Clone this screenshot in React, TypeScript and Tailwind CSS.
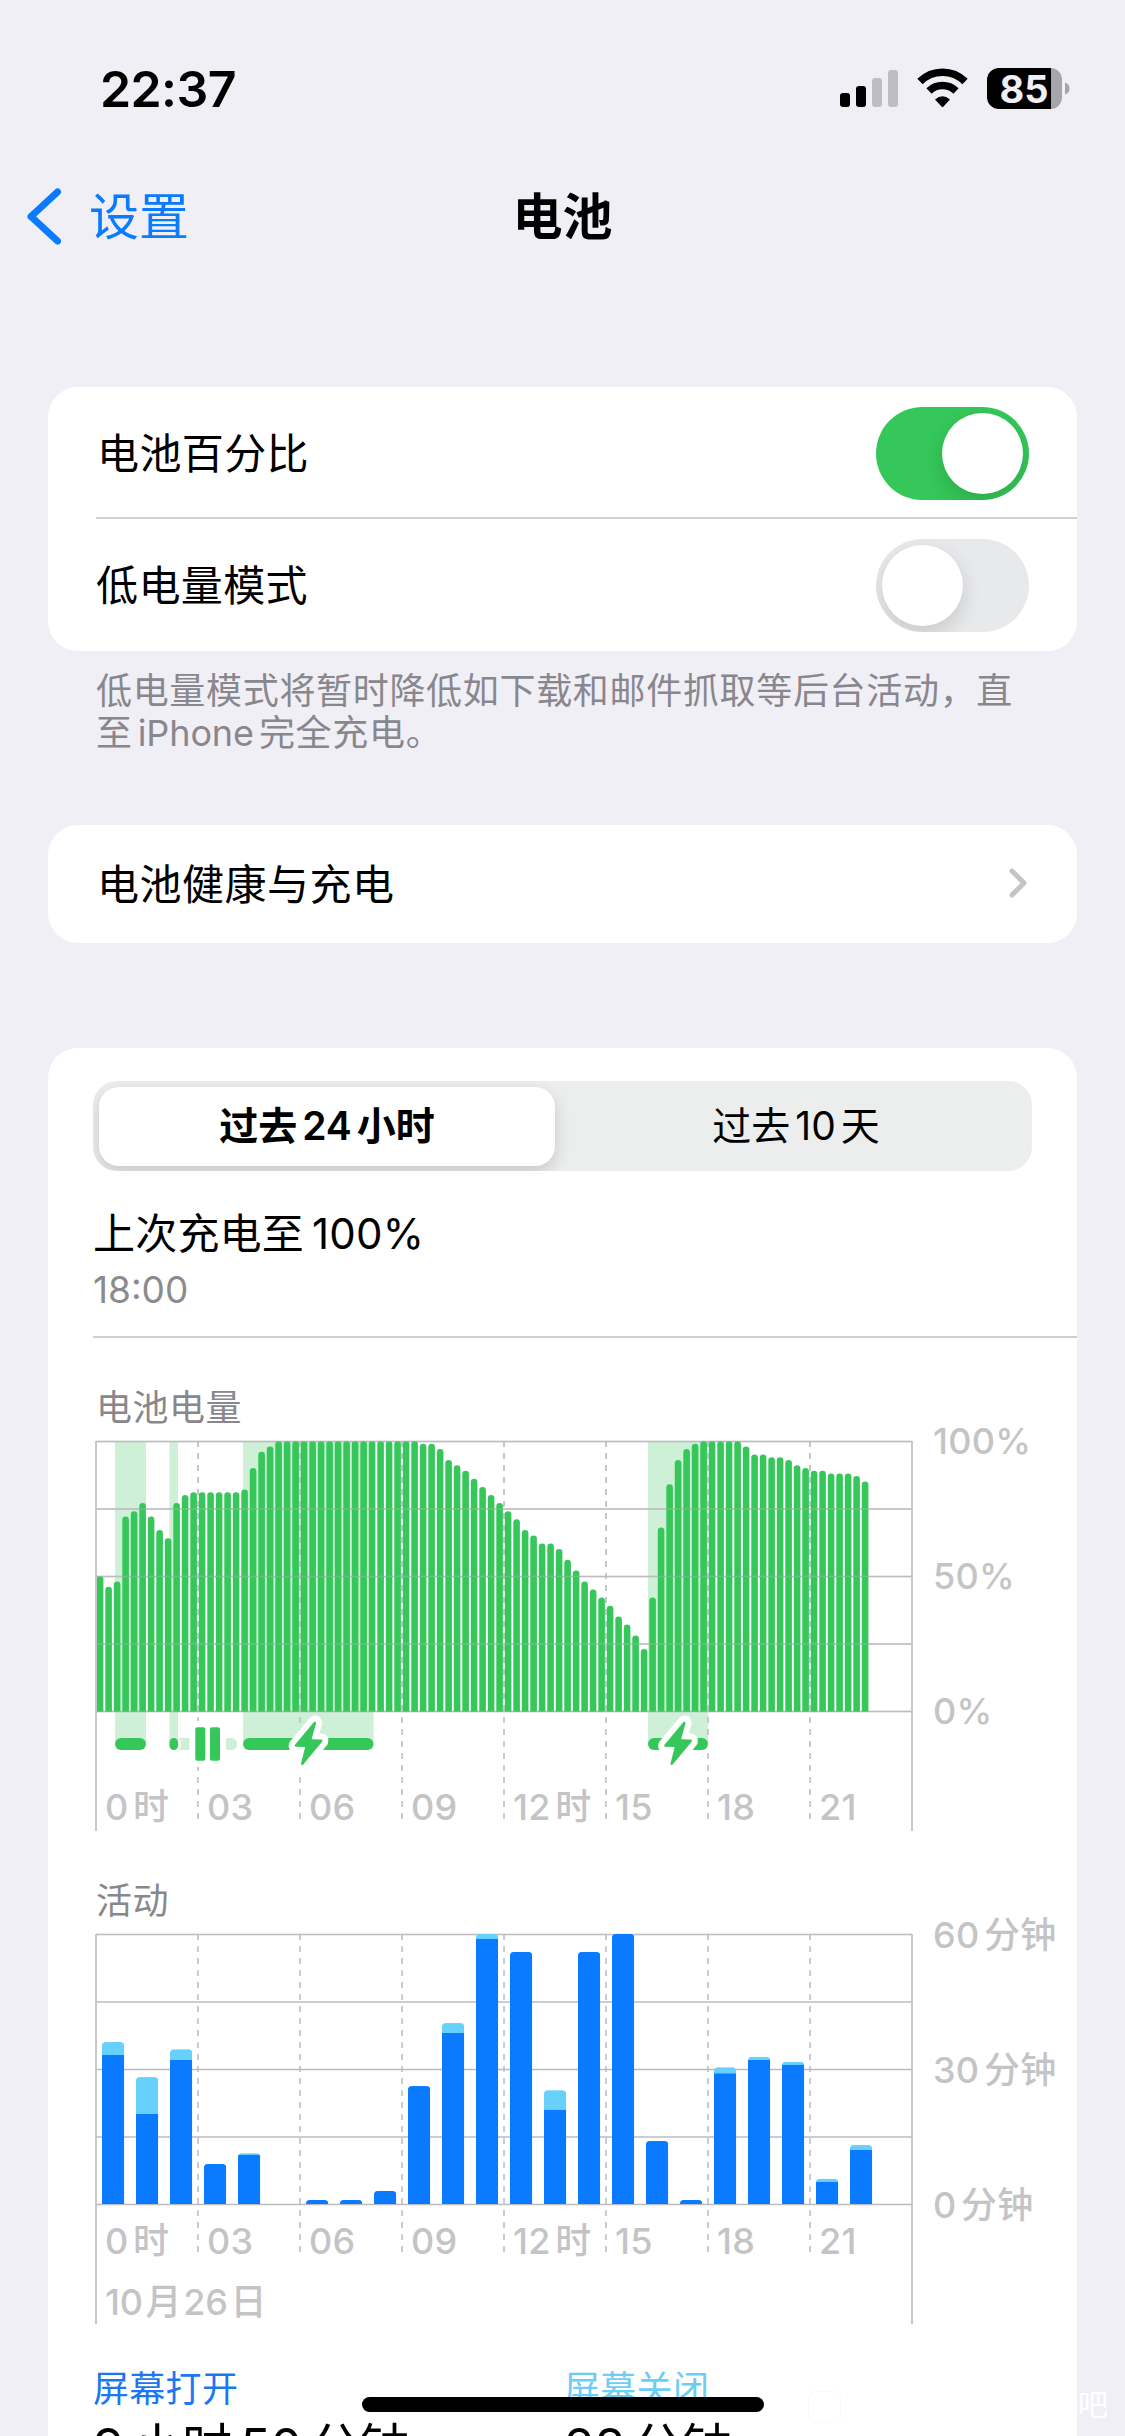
import React from "react";

// one bar per 15 minutes, value in %
const batteryLevels = [
    50, 46, 48, 72, 74, 77, 72, 67, 64, 77, 80, 81,
    81, 81, 81, 81, 81, 82, 90, 96, 98, 100, 100, 100,
    100, 100, 100, 100, 100, 100, 100, 100, 100, 100, 100, 100,
    100, 100, 99, 99, 97, 93, 91, 89, 86, 83, 80, 77,
    74, 71, 67, 65, 62, 62, 60, 56, 52, 48, 45, 42,
    39, 35, 32, 28, 23, 42, 68, 84, 93, 97, 99, 100,
    100, 100, 100, 100, 98, 95, 95, 94, 94, 93, 91, 90,
    89, 89, 88, 88, 88, 87, 85,
];

// charging ranges, in px from the left edge of the plot
const charging = [
    { start: 19, end: 50 },
    { start: 73.5, end: 82 },
    { start: 147, end: 277.5 },
    { start: 552, end: 612 },
];

// one bar per hour, minutes with the screen on / total minutes
const activity = [
    { on: 33.1, total: 36 },
    { on: 20, total: 28.2 },
    { on: 32, total: 34.4 },
    { on: 8.9, total: 8.9 },
    { on: 10.9, total: 11.3 },
    { on: 0, total: 0 },
    { on: 0.9, total: 0.9 },
    { on: 0.9, total: 0.9 },
    { on: 2.9, total: 2.9 },
    { on: 26.2, total: 26.2 },
    { on: 38, total: 40.2 },
    { on: 58.9, total: 60 },
    { on: 56, total: 56 },
    { on: 20.9, total: 25.3 },
    { on: 56, total: 56 },
    { on: 60, total: 60 },
    { on: 14, total: 14 },
    { on: 0.9, total: 0.9 },
    { on: 29, total: 30.4 },
    { on: 32, total: 32.7 },
    { on: 30.9, total: 31.6 },
    { on: 4.9, total: 5.6 },
    { on: 12, total: 13.1 },
];

const hours = [
    { num: "0", unit: "时" },
    { num: "03", unit: "" },
    { num: "06", unit: "" },
    { num: "09", unit: "" },
    { num: "12", unit: "时" },
    { num: "15", unit: "" },
    { num: "18", unit: "" },
    { num: "21", unit: "" },
];

const LEFT = 48;
const TOP = 20;
const WIDTH = 816;
const HEIGHT = 270;

function StatusBar() {
    return (
        <div className="flex h-[176px] justify-between pl-[100px] pr-[55px] pt-[64px]">
            <span className="h-[50px] text-[50px] font-semibold leading-[50px] tracking-[-0.6px]">22:37</span>
            <svg width="232" height="50" viewBox="0 0 232 50">
                <rect x="2" y="29" width="10" height="14" rx="3" fill="#000" />
                <rect x="18" y="22" width="10" height="21" rx="3" fill="#000" />
                <rect x="34" y="14" width="10" height="29" rx="3" fill="#bfbdc4" />
                <rect x="50" y="6" width="10" height="37" rx="3" fill="#bfbdc4" />
                <g fill="none" stroke="#000" strokeWidth="7.6">
                    <path d="M82 17.5A32 32 0 0 1 127 17.5" />
                    <path d="M91 27A19.5 19.5 0 0 1 118 27" />
                </g>
                <path d="M97 35.6Q104.500 29 112 35.6L105.500 42.4Q104.500 43.4 103.500 42.4Z" fill="#000" />
                <path d="M161 4H213V45H161A12 12 0 0 1 149 33V16A12 12 0 0 1 161 4Z" fill="#000" />
                <path d="M213 4A11 12 0 0 1 224 16V33A11 12 0 0 1 213 45Z" fill="#a6a5aa" />
                <path d="M227 18.5Q231.500 20 231.500 24.500T227 30.500Z" fill="#a6a5aa" />
                <text x="186" y="38.5" textAnchor="middle" fontSize="38" fontWeight="700" fill="#f1eff6">85</text>
            </svg>
        </div>
    );
}

function NavBar() {
    return (
        <div className="grid h-[211px] grid-cols-3 items-start px-[25px] pt-[10px]">
            <div className="flex h-[62px] items-center text-[#0a7aff]">
                <svg width="38" height="60" viewBox="0 0 38 60" fill="none" stroke="currentColor" strokeWidth="7" strokeLinecap="round" strokeLinejoin="round">
                    <path d="M32.500 5L6 29.500L32.500 54" />
                </svg>
                <span className="ml-[26px] text-[50px] leading-[62px]">设置</span>
            </div>
            <h1 className="text-center text-[50px] font-bold leading-[62px]">电池</h1>
        </div>
    );
}

function Toggle({ on }: { on: boolean }) {
    return (
        <div
            className={`flex h-[93px] w-[153px] items-center overflow-hidden rounded-full px-[6px] ${on ? "justify-end bg-[#35c759]" : "justify-start bg-[#e8e9eb]"}`}
        >
            <div className="size-[81px] rounded-full bg-white shadow-[0_8px_20px_rgba(0,0,0,0.14)]" />
        </div>
    );
}

function ChartText({ x, y, num, unit }: { x: number; y: number; num: string; unit?: string }) {
    return (
        <text x={x} y={y} fontSize="36" fontWeight="500" letterSpacing="0.3" fill="#c4c4c6">
            {num}
            {unit && <tspan dx="4.5">{unit}</tspan>}
        </text>
    );
}

function Grid({ dashEnd, faint }: { dashEnd: number; faint?: boolean }) {
    return (
        <g stroke="#bcbcc0" strokeWidth="1.5" opacity={faint ? 0.35 : 1}>
            {[0, 1, 2, 3, 4].map((i) => (
                <line
                    key={i}
                    x1={LEFT}
                    x2={LEFT + WIDTH}
                    y1={TOP + (i * HEIGHT) / 4 + 0.5}
                    y2={TOP + (i * HEIGHT) / 4 + 0.5}
                />
            ))}
            {[1, 2, 3, 4, 5, 6, 7].map((i) => (
                <line
                    key={i}
                    x1={LEFT + i * 102}
                    x2={LEFT + i * 102}
                    y1={TOP}
                    y2={dashEnd}
                    strokeDasharray="6 6"
                />
            ))}
        </g>
    );
}

function Frame() {
    return (
        <g stroke="#c2c2c5" strokeWidth="1.8">
            <line x1={LEFT} x2={LEFT} y1={TOP} y2="410" />
            <line x1={LEFT + WIDTH} x2={LEFT + WIDTH} y1={TOP} y2="410" />
        </g>
    );
}

function Bolt({ x }: { x: number }) {
    const bolt = "M20 0.500L0.800 23.500Q0 25.200 1.800 25.300L11.200 25.600L7 42Q7 44.600 9.200 43L28.300 20Q29 18.200 27.200 18L17.600 17.700L22 2Q22 -1 20 0.500Z";
    return (
        <g transform={`translate(${x} 300.5)`}>
            <path d={bolt} fill="#fff" stroke="#fff" strokeWidth="12" strokeLinejoin="round" />
            <path d={bolt} fill="#35c759" />
        </g>
    );
}

function BatteryChart() {
    return (
        <svg width="1029" height="410" viewBox="0 0 1029 410" className="block overflow-visible">
            {charging.map((c) => (
                <rect key={c.start} x={LEFT + c.start} y={TOP} width={c.end - c.start} height="303" fill="#cdf0d6" />
            ))}
            <Grid dashEnd={404} />
            {batteryLevels.map((level, i) => {
                const x = LEFT + 0.8 + i * 8.5;
                const y = TOP + HEIGHT - level * 2.7;
                return (
                    <path
                        key={i}
                        d={`M${x} ${TOP + HEIGHT + 1}V${y + 3.3}a3.3 3.3 0 0 1 6.6 0V${TOP + HEIGHT + 1}Z`}
                        fill="#35c759"
                    />
                );
            })}
            <Grid dashEnd={TOP + HEIGHT} faint />
            <Frame />
            {charging.map((c) => (
                <g key={c.start}>
                    <rect x={LEFT + c.start - 1.5} y="317" width={c.end - c.start + 3} height="12" fill="#fff" />
                    <rect x={LEFT + c.start} y="315" width={c.end - c.start} height="7" fill="#cdf0d6" />
                    <rect
                        x={LEFT + c.start}
                        y="317"
                        width={c.end - c.start}
                        height="12"
                        rx={Math.min(6, (c.end - c.start) / 2)}
                        fill="#35c759"
                    />
                </g>
            ))}
            {/* charging on hold */}
            <rect x="142" y="300" width="34" height="46" fill="#fff" />
            <path d="M130.500 317H141.500V329H130.500Q136 323 130.500 317Z" fill="#cdf0d6" />
            <path d="M178 317H183Q189 317 189 323T183 329H178Z" fill="#cdf0d6" />
            <rect x="147.300" y="306.300" width="10" height="33.400" rx="2" fill="#35c759" />
            <rect x="162" y="306.300" width="10" height="33.400" rx="2" fill="#35c759" />
            <Bolt x={246} />
            <Bolt x={615.5} />
            {hours.map((h, i) => (
                <ChartText key={i} x={57 + i * 102} y={399} num={h.num} unit={h.unit} />
            ))}
            <ChartText x={885} y={33} num="100%" />
            <ChartText x={885} y={168} num="50%" />
            <ChartText x={885} y={303} num="0%" />
        </svg>
    );
}

function ActivityChart() {
    return (
        <svg width="1029" height="410" viewBox="0 0 1029 410" className="block overflow-visible">
            <Grid dashEnd={344} />
            <Frame />
            {activity.map((a, i) => {
                const x = LEFT + 6 + i * 34;
                const h = a.total * 4.5;
                const r = Math.min(4, h);
                const y = TOP + HEIGHT - h;
                const clip = `hour-${i}`;
                return (
                    <g key={i}>
                        <clipPath id={clip}>
                            <path d={`M${x} ${TOP + HEIGHT}V${y + r}q0 ${-r} ${r} ${-r}h${22.2 - r * 2}q${r} 0 ${r} ${r}V${TOP + HEIGHT}Z`} />
                        </clipPath>
                        <g clipPath={`url(#${clip})`}>
                            <rect x={x} y={y} width="22.2" height={h} fill="#68d0fc" />
                            <rect x={x} y={TOP + HEIGHT - a.on * 4.5} width="22.2" height={a.on * 4.5} fill="#0a7aff" />
                        </g>
                    </g>
                );
            })}
            {hours.map((h, i) => (
                <ChartText key={i} x={57 + i * 102} y={339.5} num={h.num} unit={h.unit} />
            ))}
            <text x="57" y="400.5" fontSize="36" fontWeight="500" letterSpacing="-0.3" fill="#c4c4c6">
                10<tspan dx="3">月</tspan><tspan dx="2">26</tspan><tspan dx="3">日</tspan>
            </text>
            <ChartText x={885} y={33.5} num="60" unit="分钟" />
            <ChartText x={885} y={168.5} num="30" unit="分钟" />
            <ChartText x={885} y={303.5} num="0" unit="分钟" />
        </svg>
    );
}

export default function App() {
    return (
        <div className="relative h-[2436px] w-[1125px] overflow-hidden bg-[#f1eff6] font-['Inter','Noto_Sans_CJK_SC',sans-serif] text-black">
            <StatusBar />
            <NavBar />

            <div className="ml-[48px] mr-[48px] rounded-[30px] bg-white pl-[48px] text-[42px] tracking-[0.4px]">
                <div className="flex h-[132px] items-center justify-between border-b-2 border-[#d0d0d3] pr-[48px] pt-[2px]">
                    <span className="pl-px">电池百分比</span>
                    <Toggle on />
                </div>
                <div className="flex h-[132px] items-center justify-between pr-[48px]">
                    <span className="pt-px">低电量模式</span>
                    <Toggle on={false} />
                </div>
            </div>
            <p className="ml-[96px] h-[174px] whitespace-nowrap pt-[19px] text-[36px] leading-[42px] tracking-[0.68px] text-[#88878d]">
                低电量模式将暂时降低如下载和邮件抓取等后台活动，直
                <br />
                至<span className="mx-[5px] tracking-[-0.1px]">iPhone</span>完全充电。
            </p>

            <div className="mx-[48px] flex h-[118px] items-center justify-between rounded-[30px] bg-white pl-[49px] pr-[49px] text-[42px] tracking-[0.5px]">
                <span>电池健康与充电</span>
                <svg width="21" height="34" viewBox="0 0 21 34" fill="none" stroke="#c4c4c7" strokeWidth="5" strokeLinecap="round" strokeLinejoin="round">
                    <path d="M5 4L17 16L5 28" />
                </svg>
            </div>

            <div className="mx-[48px] mt-[105px] h-[1400px] rounded-t-[30px] bg-white pt-[33px]">
                <div className="ml-[45px] flex h-[90px] w-[939px] items-center overflow-hidden rounded-[24px] bg-[#eceeed] pl-[6px] text-[39px]">
                    <div className="flex h-[79px] w-[456px] items-center justify-center rounded-[20px] bg-white font-semibold shadow-[0_6px_16px_rgba(0,0,0,0.16)]">
                        过去<span className="mx-[5px]">24</span>小时
                    </div>
                    <div className="flex flex-1 items-center justify-center pl-[5px]">
                        过去<span className="mx-[5px]">10</span>天
                    </div>
                </div>

                <div className="ml-[45px] h-[167px] border-b-2 border-[#cfcfd2] pt-[33px]">
                    <p className="text-[42px] leading-[60px] tracking-[0.2px]">
                        上次充电至<span className="ml-[8px]">100%</span>
                    </p>
                    <p className="text-[37px] leading-[52px] text-[#8b8b8e]">18:00</p>
                </div>

                <p className="h-[83px] pl-[48px] pt-[49px] text-[36px] leading-[42px] tracking-[0.5px] text-[#88888c]">电池电量</p>
                <BatteryChart />
                <p className="h-[83px] pl-[48px] pt-[49px] text-[36px] leading-[42px] tracking-[0.5px] text-[#88888c]">活动</p>
                <ActivityChart />

                <div className="flex pl-[45px] pt-[44px]">
                    <div className="w-[471px]">
                        <p className="text-[36px] leading-[42px] tracking-[0.3px] text-[#1b78f2]">屏幕打开</p>
                        <p className="mt-[6px] whitespace-nowrap text-[50px] leading-[62px]">
                            9<span className="mx-[8px]">小时</span>50<span className="ml-[8px]">分钟</span>
                        </p>
                    </div>
                    <div>
                        <p className="text-[36px] leading-[42px] tracking-[0.3px] text-[#6ccdf5]">屏幕关闭</p>
                        <p className="mt-[6px] whitespace-nowrap text-[50px] leading-[62px]">
                            28<span className="ml-[7px]">分钟</span>
                        </p>
                    </div>
                </div>
            </div>

            <div className="absolute left-[808px] top-[2391px] h-[32px] w-[33px] rounded-[7px] border border-[#fafafa]" />
            <span className="absolute left-[1078px] top-[2389px] text-[30px] leading-[30px] text-white">吧</span>
            {/* home indicator */}
            <div className="absolute left-[362px] top-[2397px] h-[15px] w-[402px] rounded-full bg-black" />
        </div>
    );
}
